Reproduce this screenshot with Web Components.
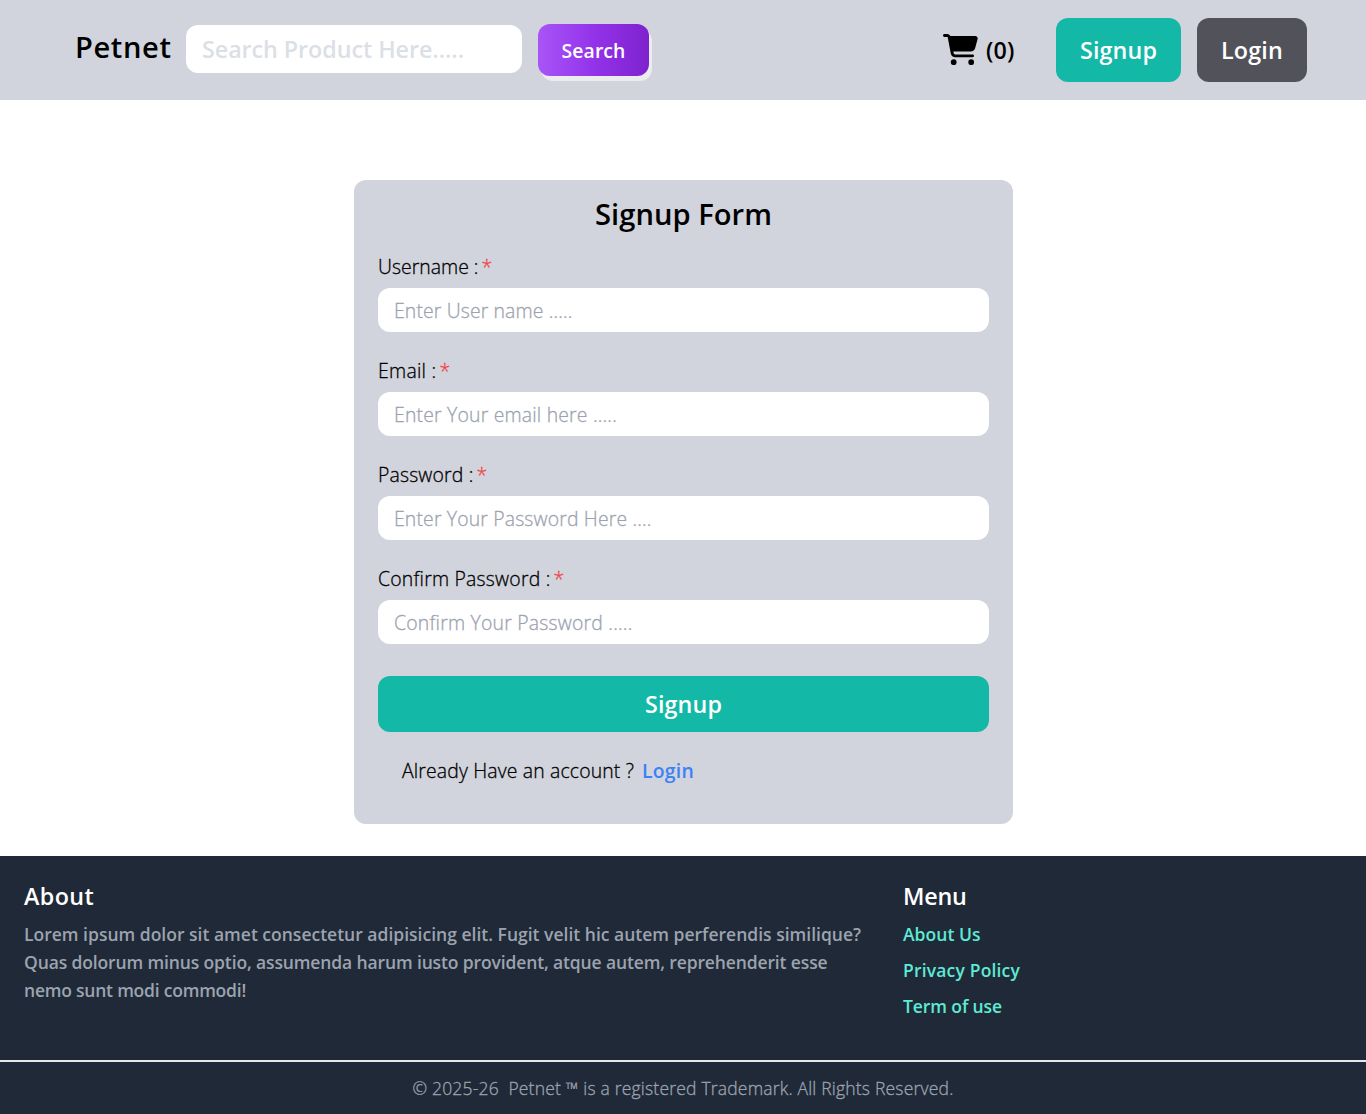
<!DOCTYPE html>
<html lang="en">
<head>
<meta charset="utf-8">
<title>Petnet</title>
<style>
html,body{margin:0;background:#fff}
body{font-family:"Open Sans","Noto Sans",sans-serif;color:#000}
</style>
</head>
<body>
<pet-app></pet-app>
<script>
const FAMILY = '"Open Sans","Noto Sans",sans-serif';
const ctx = document.createElement('canvas').getContext('2d');
// Tracking that sets a string to a given measure.
function tracking(text, font, measure) {
  ctx.font = font;
  return (measure - ctx.measureText(text).width) / text.length;
}
function define(name, html, setup) {
  const t = document.createElement('template');
  t.innerHTML = html;
  customElements.define(name, class extends HTMLElement {
    constructor() {
      super();
      this.attachShadow({mode: 'open'}).append(t.content.cloneNode(true));
    }
    connectedCallback() { if (setup) setup.call(this, this.shadowRoot); }
  });
}

define('t-line', `<style>:host{display:block;white-space:pre}:host([weight="300"]){-webkit-text-stroke:.3px currentColor}span{display:block}</style><span></span>`, function (r) {
  const s = r.querySelector('span'), text = this.getAttribute('text');
  const size = this.getAttribute('size'), weight = this.getAttribute('weight') || 600, w = +this.getAttribute('w');
  s.textContent = text;
  s.style.cssText = `font:${weight} ${size}px/var(--lh,28px) ${FAMILY};width:${w}px;letter-spacing:${tracking(text, `${weight} ${size}px ${FAMILY}`, w)}px`;
});

define('pet-input', `<style>
:host{display:block}
input{display:block;box-sizing:border-box;width:100%;height:100%;margin:0;border:0;outline:0;border-radius:12px;background:#fff;padding:0 16px}
input::placeholder{color:var(--ph,#9ca3af);opacity:1}
:host(:not([weight])) input::placeholder{-webkit-text-stroke:.3px #9ca3af}
</style><input>`, function (r) {
  const i = r.querySelector('input'), text = this.getAttribute('placeholder');
  const font = `${this.getAttribute('weight') || 300} ${this.getAttribute('size') || 19.4}px ${FAMILY}`;
  i.placeholder = text;
  i.style.font = font;
  i.style.letterSpacing = tracking(text, font, +this.getAttribute('w')) + 'px';
});

define('pet-button', `<style>
:host{display:block}
button{display:flex;align-items:center;justify-content:center;box-sizing:border-box;width:100%;height:100%;margin:0;border:0;padding:var(--pad,0 0 1px);border-radius:12px;background:var(--bg,#14b8a6);box-shadow:var(--shadow,none);color:#fff}
</style><button><slot></slot></button>`);

define('cart-icon', `<style>:host{display:block;width:35px;height:32px}svg{display:block}</style>
<svg width="35" height="31.1" viewBox="0 0 576 512"><path d="M0 24C0 10.7 10.7 0 24 0H69.5c22 0 41.5 12.8 50.6 32h411c26.3 0 45.5 25 38.6 50.4l-41 152.3c-8.5 31.4-37 53.3-69.5 53.3H170.7l5.4 28.5c2.2 11.3 12.1 19.5 23.6 19.5H488c13.3 0 24 10.7 24 24s-10.7 24-24 24H199.7c-34.6 0-64.3-24.6-70.7-58.5L77.4 54.5c-.7-3.8-4-6.5-7.9-6.5H24C10.7 48 0 37.3 0 24zM128 464a48 48 0 1 1 96 0 48 48 0 1 1-96 0zm336-48a48 48 0 1 1 0 96 48 48 0 1 1 0-96z"/></svg>`);

define('pet-header', `<style>
:host{display:flex;align-items:center;justify-content:space-between;box-sizing:border-box;height:100px;padding:0 59px 0 75px;background:#d1d4dc}
div{display:flex;align-items:center}
.brand{margin:0 14.5px 6px 0}
.find{width:336px;height:48px;margin-right:16px;margin-top:-2px;--ph:#dcdfe5}
.go{width:111px;height:52px;--pad:1px 0 0;--bg:linear-gradient(90deg,#a855f7,#9333ea 50%,#7e22ce);--shadow:3px 5px 0 #ebecee}
cart-icon{margin-right:8px}
.count{margin-right:41.5px}
.up{width:125px;height:64px;margin-right:16px}
.in{width:110px;height:64px;--bg:#52525b}
</style>
<div><t-line class="brand" text="Petnet" size="29.1" w="96.5"></t-line>
<pet-input class="find" placeholder="Search Product Here....." size="23.3" weight="600" w="262"></pet-input>
<pet-button class="go"><t-line text="Search" size="19.4" w="64"></t-line></pet-button></div>
<div><cart-icon></cart-icon><t-line class="count" text="(0)" size="23.3" w="28.5"></t-line>
<pet-button class="up"><t-line text="Signup" size="23.3" w="77"></t-line></pet-button>
<pet-button class="in"><t-line text="Login" size="23.3" w="62"></t-line></pet-button></div>`);

define('form-field', `<style>
:host{display:block;margin-bottom:24px}
.l{display:flex;gap:3px;height:28px;--lh:30px;margin-bottom:8px}
.s{color:#ef4444}
pet-input{height:44px}
</style><div class="l"></div>`, function (r) {
  const a = n => this.getAttribute(n);
  r.querySelector('.l').innerHTML = `<t-line text="${a('label')}" size="19.4" weight="300" w="${a('lw')}"></t-line><t-line class="s" text="*" size="19.4" weight="300" w="9"></t-line>`;
  const i = document.createElement('pet-input');
  i.setAttribute('placeholder', a('hint'));
  i.setAttribute('w', a('hw'));
  r.append(i);
});

define('signup-form', `<style>
:host{display:block;box-sizing:border-box;width:659px;height:644px;margin:80px 0 32px 354px;padding:16px 24px;border-radius:12px;background:#d1d4dc}
.h{display:flex;justify-content:center;--lh:36px;margin-bottom:20px}
pet-button{height:56px;margin-top:32px}
.a{display:flex;gap:8px;padding:25px 24px 0}
.a t-line+t-line{color:#3b82f6}
</style>
<div class="h"><t-line text="Signup Form" size="29.1" w="177"></t-line></div>
<form-field label="Username :" lw="100.5" hint="Enter User name ....." hw="178.5"></form-field>
<form-field label="Email :" lw="58.5" hint="Enter Your email here ....." hw="223"></form-field>
<form-field label="Password :" lw="95.5" hint="Enter Your Password Here ...." hw="257.5"></form-field>
<form-field label="Confirm Password :" lw="172.5" hint="Confirm Your Password ....." hw="238.5"></form-field>
<pet-button><t-line text="Signup" size="23.3" w="77"></t-line></pet-button>
<div class="a"><t-line text="Already Have an account ?" size="19.4" weight="300" w="232"></t-line><t-line text="Login" size="19.4" w="52"></t-line></div>`);

define('pet-footer', `<style>
:host{display:block;height:258px;background:#1f2937}
.c{display:flex;box-sizing:border-box;height:204px;padding:24px 24px 0}
.about{width:879px;color:#9ca3af}
.h{color:#fff;--lh:32px;margin-bottom:8px}
.menu{display:flex;flex-direction:column;gap:8px;color:#5eead4}
.menu .h{margin-bottom:0}
.b{display:flex;justify-content:center;border-top:2px solid #e5e7eb;padding-top:12px;color:#9ca3af}
</style>
<div class="c"><div class="about"><t-line class="h" text="About" size="23.3" w="70"></t-line>
<t-line text="Lorem ipsum dolor sit amet consectetur adipisicing elit. Fugit velit hic autem perferendis similique?" size="17.5" w="837"></t-line>
<t-line text="Quas dolorum minus optio, assumenda harum iusto provident, atque autem, reprehenderit esse" size="17.5" w="803.5"></t-line>
<t-line text="nemo sunt modi commodi!" size="17.5" w="222"></t-line></div>
<div class="menu"><t-line class="h" text="Menu" size="23.3" w="63.5"></t-line>
<t-line text="About Us" size="17.5" w="77.5"></t-line><t-line text="Privacy Policy" size="17.5" w="117"></t-line><t-line text="Term of use" size="17.5" w="99"></t-line></div></div>
<div class="b"><t-line text="© 2025-26  Petnet ™ is a registered Trademark. All Rights Reserved." size="17.5" weight="300" w="541"></t-line></div>`);

define('pet-app', `<style>:host{display:block}</style><pet-header></pet-header><signup-form></signup-form><pet-footer></pet-footer>`);
</script>
</body>
</html>
